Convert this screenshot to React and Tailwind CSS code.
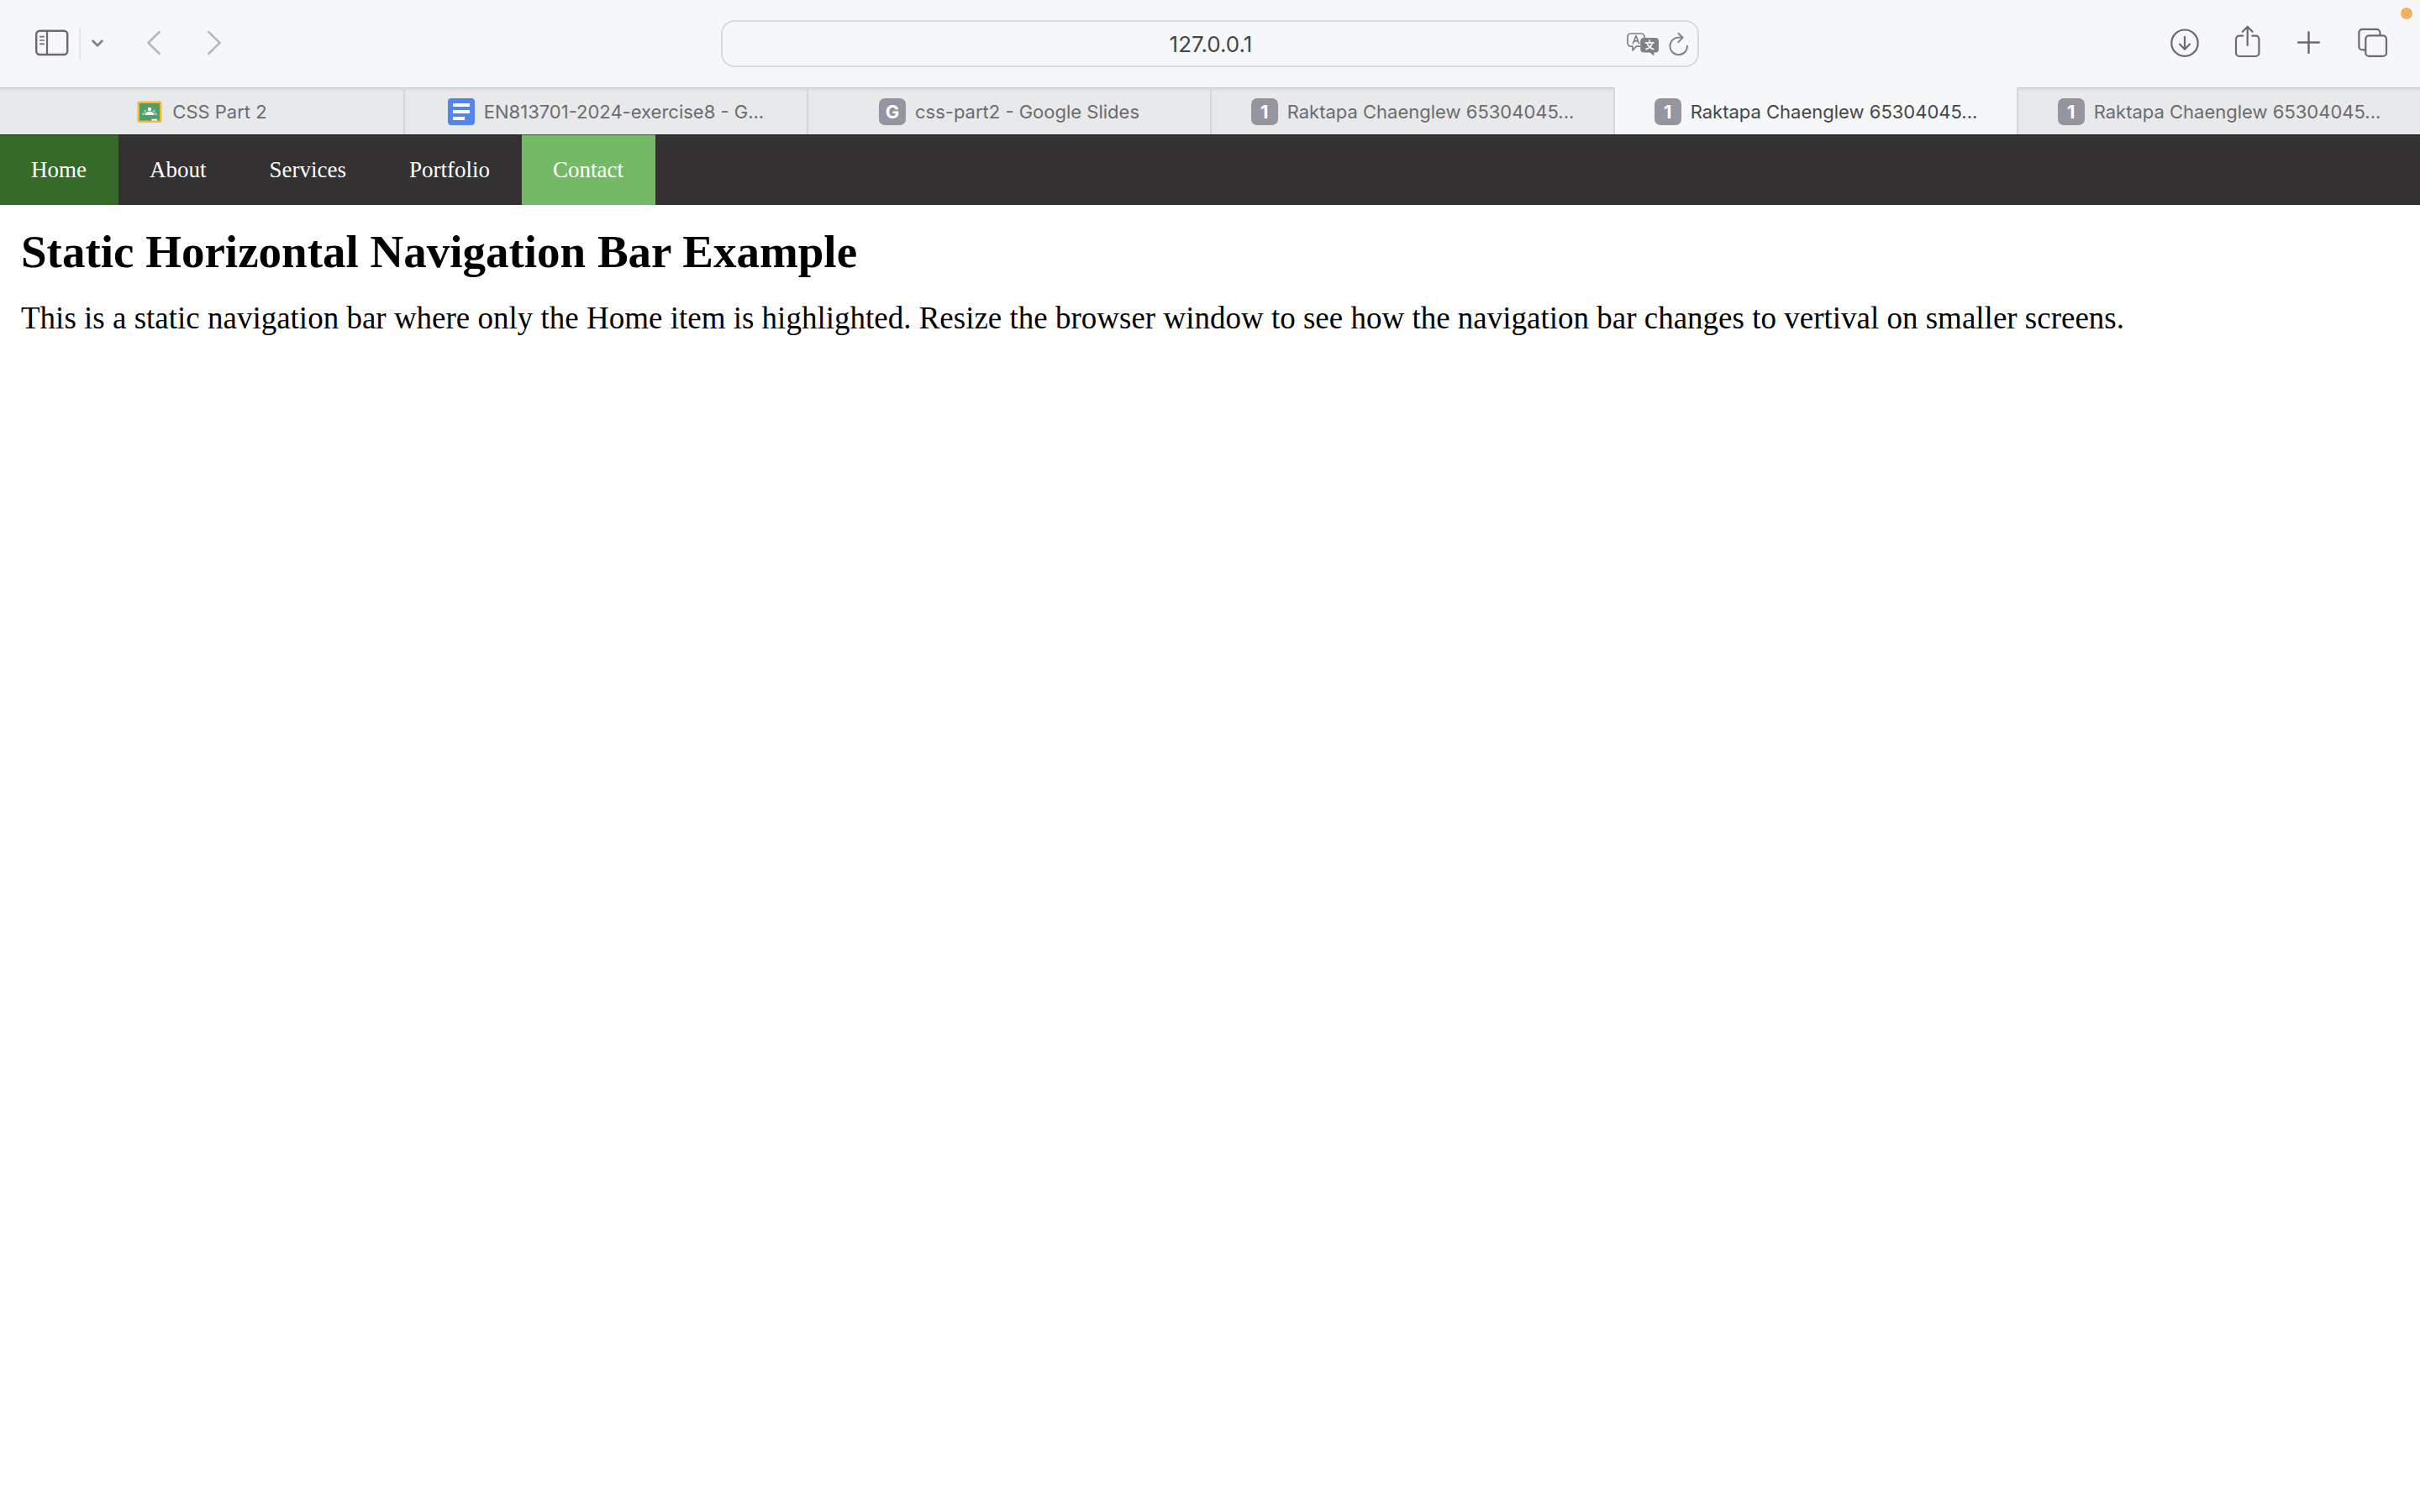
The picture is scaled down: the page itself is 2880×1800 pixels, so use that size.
const stroke = {
  fill: 'none',
  stroke: 'currentColor',
  strokeLinecap: 'round',
  strokeLinejoin: 'round',
};

function ToolButton({ label, className = '', children }) {
  return (
    <button type="button" aria-label={label} className={`flex shrink-0 ${className}`}>
      {children}
    </button>
  );
}

function SidebarIcon() {
  return (
    <svg width="40" height="44" viewBox="0 0 40 44" {...stroke} strokeWidth="2">
      <rect x="1.2" y="6.8" width="37" height="28.2" rx="4" strokeWidth="2.4" />
      <path d="M14 7v28" strokeWidth="2.2" />
      <path d="M5.8 13.6h4.4M5.8 18h4.4M5.8 22.4h4.4" strokeWidth="1.7" />
    </svg>
  );
}

function TranslateIcon() {
  return (
    <svg width="38" height="44" viewBox="0 0 38 44" {...stroke}>
      <path
        d="M15.5 25.2h-4L7 29.8v-4.6H5A4 4 0 0 1 1 21.2V14a4 4 0 0 1 4-4h12a4 4 0 0 1 4 4v1"
        strokeWidth="1.7"
      />
      <path d="M7.4 21.8 11 12.6l3.6 9.2M8.6 18.8h4.8" strokeWidth="1.7" />
      <path
        d="M20.2 15H34a4 4 0 0 1 4 4v9.4a4 4 0 0 1-4 4h-1.6v4.4l-4.8-4.4h-7.4a4 4 0 0 1-4-4V19a4 4 0 0 1 4-4z"
        fill="currentColor"
        stroke="none"
      />
      <path
        d="M27.2 17.8v2.4M22.4 20.8h9.8M30.4 20.8c-.8 3.6-3.6 6.6-7.4 7.8M24.2 20.8c.8 3.6 3.6 6.6 7.6 7.8"
        stroke="#f5f7f9"
        strokeWidth="1.7"
      />
    </svg>
  );
}

function ReloadIcon() {
  return (
    <svg width="24" height="44" viewBox="0 0 24 44" {...stroke} strokeWidth="1.9">
      <path d="M22 24.6A10.3 10.3 0 1 1 11.7 14.6h4.6" />
      <path d="m11.4 9.8 5.2 4.9-5.2 5.5" />
    </svg>
  );
}

function DownloadIcon() {
  return (
    <svg width="36" height="44" viewBox="0 0 36 44" {...stroke} strokeWidth="2.2">
      <circle cx="18" cy="21.2" r="15.7" />
      <path d="M18 13.8v15M12 22.6l6 6.2 6-6.2" />
    </svg>
  );
}

function ShareIcon() {
  return (
    <svg width="38" height="44" viewBox="0 0 38 44" {...stroke} strokeWidth="2.2">
      <path d="M13.2 12.6H9a4 4 0 0 0-4 4V33a4 4 0 0 0 4 4h19.4a4 4 0 0 0 4-4V16.6a4 4 0 0 0-4-4h-4.2" />
      <path d="M18.7 24V2.4M12.8 7.8l5.9-5.9 5.9 5.9" />
    </svg>
  );
}

function PlusIcon() {
  return (
    <svg width="36" height="44" viewBox="0 0 36 44" {...stroke} strokeWidth="2.5">
      <path d="M15.5 8.2v24.6M3.2 20.5h24.6" />
    </svg>
  );
}

function TabsIcon() {
  return (
    <svg width="36" height="44" viewBox="0 0 36 44" {...stroke} strokeWidth="2.2">
      <rect x="9.3" y="12.3" width="24.7" height="24.6" rx="4" />
      <path d="M9 29.4H5.4a4 4 0 0 1-4-4V8.8a4 4 0 0 1 4-4h17a4 4 0 0 1 4 4v3.2" />
    </svg>
  );
}

function ClassroomIcon() {
  return (
    <svg className="shrink-0" width="32" height="32" viewBox="0 0 32 32">
      <rect x="1.5" y="3.5" width="29" height="25.5" rx="2.2" fill="#f0b93c" />
      <rect x="4" y="6" width="24" height="20.5" fill="#4c9f68" />
      <g fill="#fff">
        <circle cx="16" cy="13" r="2.2" />
        <path d="M11 20v-1.2c0-1.9 2.7-3.1 5-3.1s5 1.2 5 3.1V20z" />
        <g opacity=".45">
          <circle cx="10.6" cy="15" r="1.5" />
          <circle cx="21.4" cy="15" r="1.5" />
          <path d="M7 20v-.9c0-1.3 1.8-2.1 3.6-2.1V20zM25 20v-.9c0-1.3-1.8-2.1-3.6-2.1V20z" />
        </g>
        <rect x="18.5" y="24.7" width="6.5" height="1.9" />
      </g>
    </svg>
  );
}

function DocsIcon() {
  return (
    <svg className="shrink-0" width="32" height="32" viewBox="0 0 32 32">
      <rect width="32" height="32" rx="4" fill="#5484ee" />
      <path d="M6 6h20v4H6zM6 14h20v4H6zM6 22h14v4H6z" fill="#fff" />
    </svg>
  );
}

function LetterIcon({ letter }) {
  return (
    <span className="flex size-8 shrink-0 items-center justify-center rounded-[7px] bg-[#9594a1] text-[22px] leading-none font-bold text-white">
      {letter}
    </span>
  );
}

const tabs = [
  { title: 'CSS Part 2', icon: <ClassroomIcon /> },
  { title: 'EN813701-2024-exercise8 - G...', icon: <DocsIcon /> },
  { title: 'css-part2 - Google Slides', icon: <LetterIcon letter="G" /> },
  { title: 'Raktapa Chaenglew 65304045...', icon: <LetterIcon letter="1" /> },
  { title: 'Raktapa Chaenglew 65304045...', icon: <LetterIcon letter="1" />, active: true },
  { title: 'Raktapa Chaenglew 65304045...', icon: <LetterIcon letter="1" /> },
];

const links = [
  { name: 'Home', style: 'bg-[#356a28]' },
  { name: 'About', style: '' },
  { name: 'Services', style: '' },
  { name: 'Portfolio', style: '' },
  { name: 'Contact', style: 'bg-[#74ba66]' },
];

function Toolbar() {
  return (
    <div className="relative flex h-[104px] items-center bg-[#f5f7f9] text-[#6b6b6d]">
      <div className="flex flex-1 items-center pl-[38px]">
        <ToolButton label="Show sidebar" className="ml-1"><SidebarIcon /></ToolButton>
        <span className="ml-3 h-9 w-[2px] bg-[#e5e6e9]" />
        <ToolButton label="Tab groups" className="ml-[13px] text-[#828189]">
          <svg width="14" height="44" viewBox="0 0 14 44" {...stroke} strokeWidth="2.8">
            <path d="m1.6 18.8 5.4 5.4 5.4-5.4" />
          </svg>
        </ToolButton>
        <ToolButton label="Back" className="ml-[52px] text-[#b6b7b9]">
          <svg width="16" height="44" viewBox="0 0 16 44" {...stroke} strokeWidth="2.5">
            <path d="M14.8 8 1.4 21l13.4 13" />
          </svg>
        </ToolButton>
        <ToolButton label="Forward" className="ml-14 text-[#b6b7b9]">
          <svg width="16" height="44" viewBox="0 0 16 44" {...stroke} strokeWidth="2.5">
            <path d="m1.2 8 13.4 13L1.2 34" />
          </svg>
        </ToolButton>
      </div>
      <div className="flex h-14 w-[1164px] items-center rounded-2xl border-2 border-[#d8dadc] pr-[10px] pl-[86px] text-[#7f8082]">
        <input
          type="text"
          aria-label="Address"
          defaultValue="127.0.0.1"
          className="min-w-0 flex-1 bg-transparent text-center text-[26px] text-[#454648] outline-none"
        />
        <ToolButton label="Translate"><TranslateIcon /></ToolButton>
        <ToolButton label="Reload" className="ml-3"><ReloadIcon /></ToolButton>
      </div>
      <div className="flex flex-1 items-center justify-end gap-[38px] pr-[38px]">
        <ToolButton label="Downloads"><DownloadIcon /></ToolButton>
        <ToolButton label="Share"><ShareIcon /></ToolButton>
        <ToolButton label="New tab"><PlusIcon /></ToolButton>
        <ToolButton label="Tab overview"><TabsIcon /></ToolButton>
      </div>
      <span className="absolute top-[9px] right-[9px] size-[14px] rounded-full bg-[#f2b162]" />
    </div>
  );
}

function TabBar() {
  return (
    <div role="tablist" className="grid h-14 grid-cols-6 bg-[#e8e9eb]">
      {tabs.map((tab, i) => (
        <button
          key={i}
          type="button"
          role="tab"
          aria-selected={Boolean(tab.active)}
          className={`flex min-w-0 items-center justify-center gap-[11px] border-[#d6d7d9] pt-[2px] text-[22px] whitespace-nowrap ${
            i > 0 ? 'border-l-2' : ''
          } ${
            tab.active
              ? 'bg-[#f5f7f9] text-[#454648]'
              : 'text-[#6b6c6e] shadow-[inset_0_1px_0_#c3c5c7,inset_0_5px_4px_-3px_#d0d2d4]'
          }`}
        >
          {tab.icon}
          <span>{tab.title}</span>
        </button>
      ))}
    </div>
  );
}

export default function App() {
  return (
    <div className="min-h-screen bg-white">
      <header className="font-['Inter',sans-serif]">
        <Toolbar />
        <TabBar />
      </header>
      <div className="font-['Liberation_Serif',serif] text-black">
        <nav className="relative flex h-[84px] bg-[#333132] text-[27px] text-white">
          {links.map((link) => (
            <a key={link.name} href="#" className={`flex items-center pr-[38px] pl-[37px] ${link.style}`}>
              {link.name}
            </a>
          ))}
          <span className="absolute inset-x-0 top-0 h-px bg-black/50" />
        </nav>
        <main className="px-[25px] pt-6">
          <h1 className="text-[55px] leading-[64px] font-bold">Static Horizontal Navigation Bar Example</h1>
          <p className="mt-[25px] text-[37px] leading-[44px]">
            This is a static navigation bar where only the Home item is highlighted. Resize the browser window to see
            how the navigation bar changes to vertival on smaller screens.
          </p>
        </main>
      </div>
    </div>
  );
}
